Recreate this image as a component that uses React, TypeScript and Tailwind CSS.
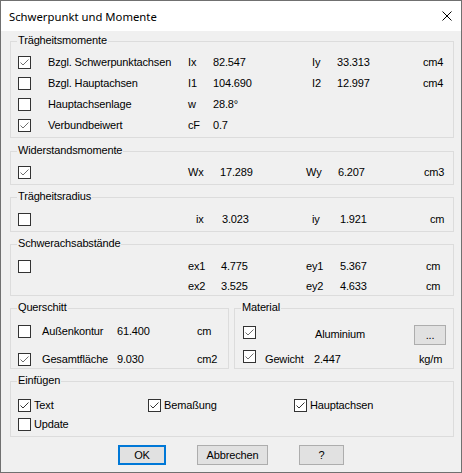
import React from 'react';

interface CheckProps {
  checked?: boolean;
  dark?: boolean;
  className?: string;
}

const Check: React.FC<CheckProps> = ({ checked, dark, className = '' }) => (
  <span
    className={`inline-flex h-[13px] w-[13px] shrink-0 items-center justify-center border border-[#333333] bg-white ${className}`}
  >
    {checked && (
      <svg width="11" height="11" viewBox="0 0 11 11">
        <polyline
          points="1.5,5.5 4,8 9.5,2.5"
          fill="none"
          stroke={dark ? '#333333' : '#6e6e6e'}
          strokeWidth="1"
        />
      </svg>
    )}
  </span>
);

interface GroupBoxProps {
  title: string;
  className?: string;
  children: React.ReactNode;
}

const GroupBox: React.FC<GroupBoxProps> = ({ title, className = '', children }) => (
  <div className={`relative border border-[#dcdcdc] ${className}`}>
    <span className="absolute -top-[8px] left-[6px] bg-[#f0f0f0] px-[1px] leading-[13px]">{title}</span>
    {children}
  </div>
);

const Btn: React.FC<{ className?: string; children: React.ReactNode }> = ({ className = '', children }) => (
  <button className={`h-[20px] bg-[#e1e1e1] text-black ${className}`}>{children}</button>
);

export default function App() {
  return (
    <div className="flex h-[473px] w-[462px] flex-col border border-[#707070] font-['Liberation_Sans',Arial,sans-serif] text-[11px] leading-[13px] tracking-[-0.15px] text-black">
      {/* title bar */}
      <div className="flex h-[30px] shrink-0 items-center justify-between bg-white pl-[8px] pr-[9px]">
        <span className="font-['Noto_Sans',sans-serif] text-[11.3px] tracking-normal">Schwerpunkt und Momente</span>
        <svg width="10" height="10" viewBox="0 0 10 10">
          <path d="M0.5 0.5 L9.5 9.5 M9.5 0.5 L0.5 9.5" stroke="#000" strokeWidth="1" />
        </svg>
      </div>

      <div className="flex flex-1 flex-col bg-[#f0f0f0]">
        <GroupBox title="Trägheitsmomente" className="ml-[9px] mt-[10px] h-[97px] w-[444px] pt-[10px]">
          <div className="grid h-[21px] grid-cols-[37px_140px_25px_99px_25px_86px_1fr] items-center">
            <Check checked className="ml-[7px]" />
            <span>Bzgl. Schwerpunktachsen</span>
            <span>Ix</span>
            <span>82.547</span>
            <span>Iy</span>
            <span>33.313</span>
            <span>cm4</span>
          </div>
          <div className="grid h-[21px] grid-cols-[37px_140px_25px_99px_25px_86px_1fr] items-center">
            <Check className="ml-[7px]" />
            <span>Bzgl. Hauptachsen</span>
            <span>I1</span>
            <span>104.690</span>
            <span>I2</span>
            <span>12.997</span>
            <span>cm4</span>
          </div>
          <div className="grid h-[21px] grid-cols-[37px_140px_25px_99px_25px_86px_1fr] items-center">
            <Check className="ml-[7px]" />
            <span>Hauptachsenlage</span>
            <span>w</span>
            <span>28.8°</span>
          </div>
          <div className="grid h-[21px] grid-cols-[37px_140px_25px_99px_25px_86px_1fr] items-center">
            <Check checked className="ml-[7px]" />
            <span>Verbundbeiwert</span>
            <span>cF</span>
            <span>0.7</span>
          </div>
        </GroupBox>

        <GroupBox title="Widerstandsmomente" className="ml-[9px] mt-[13px] h-[34px] w-[444px] pt-[10px]">
          <div className="grid h-[21px] grid-cols-[177px_32px_86px_32px_86px_1fr] items-center">
            <Check checked className="ml-[7px]" />
            <span>Wx</span>
            <span>17.289</span>
            <span>Wy</span>
            <span>6.207</span>
            <span>cm3</span>
          </div>
        </GroupBox>

        <GroupBox title="Trägheitsradius" className="ml-[9px] mt-[12px] h-[35px] w-[444px] pt-[11px]">
          <div className="grid h-[21px] grid-cols-[185px_26px_90px_28px_90px_1fr] items-center">
            <Check className="ml-[7px]" />
            <span>ix</span>
            <span>3.023</span>
            <span>iy</span>
            <span>1.921</span>
            <span>cm</span>
          </div>
        </GroupBox>

        <GroupBox title="Schwerachsabstände" className="ml-[9px] mt-[12px] h-[52px] w-[444px] pt-[11px]">
          <div className="grid h-[21px] grid-cols-[177px_33px_85px_34px_86px_1fr] items-center">
            <Check className="ml-[7px]" />
            <span>ex1</span>
            <span>4.775</span>
            <span>ey1</span>
            <span>5.367</span>
            <span>cm</span>
          </div>
          <div className="grid h-[18px] grid-cols-[177px_33px_85px_34px_86px_1fr] items-center">
            <span />
            <span>ex2</span>
            <span>3.525</span>
            <span>ey2</span>
            <span>4.633</span>
            <span>cm</span>
          </div>
        </GroupBox>

        <div className="ml-[9px] mt-[12px] flex gap-[5px]">
          <GroupBox title="Querschitt" className="h-[61px] w-[219px] pt-[12px]">
            <div className="grid h-[20px] grid-cols-[31px_75px_80px_1fr] items-center">
              <Check className="ml-[7px]" />
              <span>Außenkontur</span>
              <span>61.400</span>
              <span>cm</span>
            </div>
            <div className="mt-[9px] grid h-[18px] grid-cols-[31px_75px_80px_1fr] items-center">
              <Check checked className="ml-[7px]" />
              <span>Gesamtfläche</span>
              <span>9.030</span>
              <span>cm2</span>
            </div>
          </GroupBox>

          <GroupBox title="Material" className="h-[61px] w-[220px] pt-[16px]">
            <div className="flex h-[20px] items-start">
              <div className="w-[80px] pl-[8px] pt-[1px]">
                <Check checked />
              </div>
              <span className="mt-[3px] w-[99px]">Aluminium</span>
              <Btn className="w-[32px] border border-[#adadad] leading-[16px]">...</Btn>
            </div>
            <div className="mt-[5px] flex h-[18px] items-start">
              <div className="w-[30px] pl-[8px]">
                <Check checked />
              </div>
              <span className="mt-[3px] w-[49px]">Gewicht</span>
              <span className="mt-[3px] w-[105px]">2.447</span>
              <span className="mt-[3px]">kg/m</span>
            </div>
          </GroupBox>
        </div>

        <GroupBox title="Einfügen" className="ml-[9px] mt-[12px] h-[56px] w-[444px] pt-[13px]">
          <div className="grid h-[20px] grid-cols-[137px_146px_1fr] items-center">
            <label className="flex items-center gap-[3px] pl-[7px]">
              <Check checked dark />
              <span>Text</span>
            </label>
            <label className="flex items-center gap-[3px]">
              <Check checked dark />
              <span>Bemaßung</span>
            </label>
            <label className="flex items-center gap-[3px]">
              <Check checked dark />
              <span>Hauptachsen</span>
            </label>
          </div>
          <div className="grid h-[19px] grid-cols-[137px_146px_1fr] items-center">
            <label className="flex items-center gap-[3px] pl-[7px]">
              <Check dark />
              <span>Update</span>
            </label>
          </div>
        </GroupBox>

        <div className="mt-[8px] flex justify-center gap-[31px]">
          <Btn className="w-[48px] border-2 border-[#0078d7]">OK</Btn>
          <Btn className="w-[71px] border border-[#adadad]">Abbrechen</Btn>
          <Btn className="w-[45px] border border-[#adadad]">?</Btn>
        </div>
      </div>
    </div>
  );
}
